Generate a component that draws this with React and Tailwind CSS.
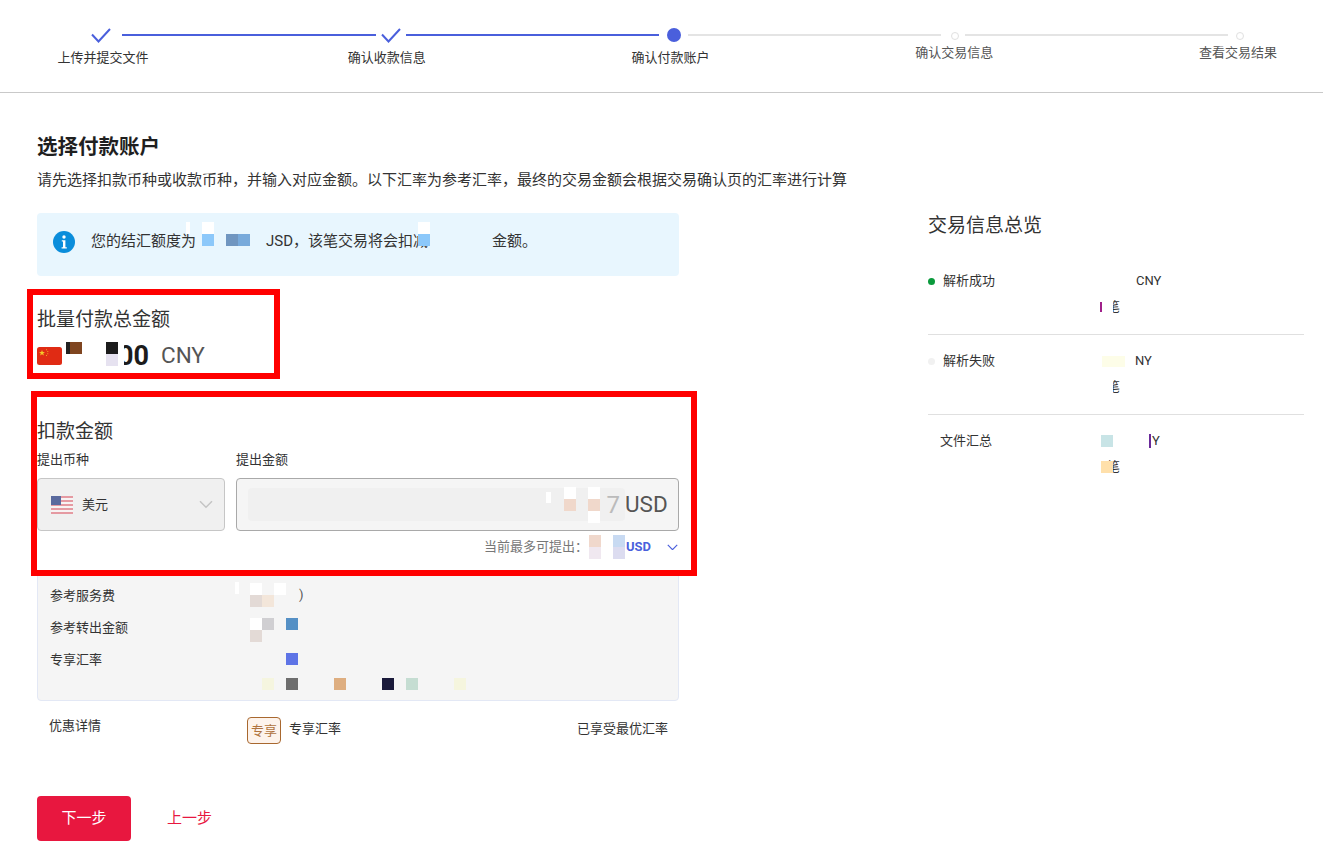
import React from "react";

const Check = () => (
  <svg width="20" height="15" viewBox="0 0 20 15" fill="none" className="shrink-0">
    <polyline points="1,6.5 7.5,13.5 19,1" stroke="#4a5fdc" strokeWidth="2" />
  </svg>
);

const Chevron = ({ color, size = 14, stroke = 1.5 }) => (
  <svg width={size} height={size * 0.6} viewBox="0 0 14 8" fill="none" className="shrink-0">
    <polyline points="1,1 7,7 13,1" stroke={color} strokeWidth={stroke} />
  </svg>
);

const FlagCN = () => (
  <svg width="25" height="18" viewBox="0 0 25 18" className="shrink-0">
    <rect width="25" height="18" rx="2.5" fill="#e02b14" />
    <polygon points="5,3 5.8,5 8,5 6.2,6.3 6.9,8.4 5,7.2 3.1,8.4 3.8,6.3 2,5 4.2,5" fill="#f4c92a" />
    <circle cx="9.5" cy="2.8" r="0.5" fill="#f4c92a" />
    <circle cx="10.8" cy="4.6" r="0.5" fill="#f4c92a" />
    <circle cx="10.8" cy="6.8" r="0.5" fill="#f4c92a" />
    <circle cx="9.5" cy="8.6" r="0.5" fill="#f4c92a" />
  </svg>
);

const FlagUS = () => (
  <svg width="22" height="18" viewBox="0 0 22 18" className="shrink-0">
    <rect width="22" height="18" rx="2" fill="#f7f3f3" />
    <rect y="0" width="22" height="2" fill="#e59aa2" />
    <rect y="4" width="22" height="2" fill="#e59aa2" />
    <rect y="8" width="22" height="2" fill="#e59aa2" />
    <rect y="12" width="22" height="2" fill="#e59aa2" />
    <rect y="16" width="22" height="2" fill="#e59aa2" />
    <rect width="10" height="9" fill="#5a6a9e" />
  </svg>
);

const InfoIcon = () => (
  <svg width="22" height="22" viewBox="0 0 22 22" className="shrink-0">
    <circle cx="11" cy="11" r="11" fill="#0a8ddb" />
    <circle cx="11" cy="6" r="1.7" fill="#fff" />
    <path d="M8.8 9.2h3.6v7h1.4v1.4H8.6v-1.4h1.4v-5.6H8.8z" fill="#fff" />
  </svg>
);

// pixelated redaction squares, 12px grid, "" leaves a cell empty
const Mosaic = ({ rows, className = "" }) => (
  <div className={"flex flex-col shrink-0 " + className}>
    {rows.map((row, i) => (
      <div key={i} className="flex">
        {row.map((cell, j) => (
          <span key={j} className={"block w-[12px] h-[12px] " + cell} />
        ))}
      </div>
    ))}
  </div>
);

const Blot = ({ className }) => <span className={"absolute block " + className} />;

const Label = ({ children, className = "" }) => (
  <div className={"w-[100px] text-center text-[13px] leading-[18px] " + className}>{children}</div>
);

const Stepper = () => (
  <div className="h-[93px] border-b border-[#c9c9c9]">
    <div className="flex items-center pl-[91px] pt-[27px] h-[43px]">
      <Check />
      <div className="ml-[11px] w-[254px] h-[2px] bg-[#4a5fdc]" />
      <div className="ml-[5px]"><Check /></div>
      <div className="ml-[5px] w-[253px] h-[2px] bg-[#4a5fdc]" />
      <div className="ml-[8px] w-[14px] h-[14px] rounded-full bg-[#4a5fdc]" />
      <div className="ml-[7px] w-[253px] h-[2px] bg-[#e4e4e4]" />
      <div className="ml-[10px] mt-[2px] w-[8px] h-[8px] rounded-full border border-[#e0e0e0]" />
      <div className="ml-[6px] w-[263px] h-[2px] bg-[#e4e4e4]" />
      <div className="ml-[8px] mt-[2px] w-[8px] h-[8px] rounded-full border border-[#e0e0e0]" />
    </div>
    <div className="flex justify-between pl-[53px] pr-[35px] text-[#333]">
      <Label className="mt-[6px]">上传并提交文件</Label>
      <Label className="mt-[6px]">确认收款信息</Label>
      <Label className="mt-[6px]">确认付款账户</Label>
      <Label className="mt-px text-[#555]">确认交易信息</Label>
      <Label className="mt-px text-[#555]">查看交易结果</Label>
    </div>
  </div>
);

const InfoBox = () => (
  <div className="relative flex items-center h-[63px] pl-[16px] pb-[6px] rounded bg-[#e8f6fe] text-[15px] text-[#333]">
    <InfoIcon />
    <span className="ml-[16px]">您的结汇额度为</span>
    <Mosaic
      className="ml-[6px] self-start mt-[9px]"
      rows={[
        ["bg-white"],
        ["bg-[#8cc8fa]", "", "bg-[#7096c0]", "bg-[#78aadb]"],
      ]}
    />
    <span className="ml-[16px]">JSD，该笔交易将会扣减</span>
    <Mosaic
      className="ml-[-10px] self-start mt-[9px]"
      rows={[["bg-white"], ["bg-[#8cc8fa]"]]}
    />
    <span className="ml-[62px]">金额。</span>
    <Blot className="left-[149px] top-[9px] w-[4px] h-[12px] bg-white" />
  </div>
);

const TotalAmount = () => (
  <div className="relative mt-[29px]">
    <div className="pt-[2px] text-[19px] leading-[26px] text-[#333]">批量付款总金额</div>
    <div className="relative flex items-center h-[34px] mt-[6px]">
      <FlagCN />
      <span className="ml-[4px] self-start mt-[3px] w-[4px] h-[12px] bg-[#222]" />
      <Mosaic
        className="self-start mt-[3px]"
        rows={[
          ["bg-[#7f4520]", "", "", "bg-[#1c1c1c]"],
          ["", "", "", "bg-[#e6e2f0]"],
        ]}
      />
      <span className="text-[27px] font-bold text-[#1c1c1c]">00</span>
      <span className="ml-[12px] text-[22.5px] text-[#555]">CNY</span>
      <Blot className="left-[81px] top-[3px] w-[6px] h-[24px] bg-white" />
    </div>
    <div className="absolute left-[-10px] top-[-16px] z-10 w-[253px] h-[90px] border-[6px] border-[#ff0000]" />
  </div>
);

const Deduction = () => (
  <div className="relative mt-[44px]">
    <div className="pt-[2px] text-[19px] leading-[26px] text-[#333]">扣款金额</div>
    <div className="flex mt-[6px] text-[13px] leading-[18px] text-[#333]">
      <span className="w-[199px]">提出币种</span>
      <span>提出金额</span>
    </div>
    <div className="flex gap-[11px] mt-[9px]">
      <div className="flex items-center w-[188px] h-[53px] pl-[13px] pr-[11px] rounded border border-[#c6c6c6] bg-[#f0f0f0]">
        <FlagUS />
        <span className="ml-[9px] text-[13px] text-[#333]">美元</span>
        <span className="ml-auto"><Chevron color="#c4c4c4" /></span>
      </div>
      <div className="flex items-center flex-1 h-[53px] pl-[11px] rounded border border-[#a9a9a9] bg-[#f5f5f5]">
        <div className="flex items-center justify-end w-[377px] h-[33px] pr-[5px] rounded bg-[#f0f0f0] text-[24px] text-[#bbbbbb]">
          <span className="w-[5px] h-[11px] mr-[13px] mb-[14px] bg-white" />
          <Mosaic
            rows={[
              ["bg-white", "", "bg-white"],
              ["bg-[#f0d8cb]", "", "bg-[#f0d8cb]"],
              ["", "", "bg-white"],
            ]}
          />
          <span className="ml-[7px]">7</span>
        </div>
        <span className="text-[22.5px] text-[#555]">USD</span>
      </div>
    </div>
    <div className="flex items-center justify-end h-[18px] mt-[7px] pr-px">
      <span className="text-[13px] text-[#777]">当前最多可提出：</span>
      <Mosaic
        className="ml-px"
        rows={[
          ["bg-[#f0d8cc]", "", "bg-[#c8daf2]"],
          ["bg-[#f0e8f0]", "", "bg-[#dcdcf0]"],
        ]}
      />
      <span className="ml-px text-[13px] font-bold text-[#4a5fdc]">USD</span>
      <span className="ml-[16px]"><Chevron color="#4a5fdc" size={11} /></span>
    </div>
    <div className="absolute left-[-6px] top-[-26px] z-10 w-[666px] h-[185px] border-[6px] border-[#ff0000]" />
  </div>
);

const FeeRow = ({ label, children }) => (
  <div className="flex items-center h-[32px] text-[13px] text-[#333]">
    <span className="w-[200px] mt-[2px]">{label}</span>
    {children}
  </div>
);

const FeePanel = () => (
  <div className="relative mt-[16px] h-[129px] pt-[6px] px-[12px] rounded-b border border-[#e3e8f5] bg-[#f5f5f5]">
    <FeeRow label="参考服务费">
      <Mosaic
        rows={[
          ["bg-white", "", "bg-white"],
          ["bg-[#e3dad6]", "bg-[#f3e6da]"],
        ]}
      />
      <span className="ml-[13px] text-[#555]">)</span>
    </FeeRow>
    <FeeRow label="参考转出金额">
      <Mosaic
        className="mt-[6px]"
        rows={[
          ["bg-white", "bg-[#d0cfd2]", "", "bg-[#5590c5]"],
          ["bg-[#e3dad6]"],
        ]}
      />
    </FeeRow>
    <FeeRow label="专享汇率">
      <Mosaic rows={[["", "", "", "bg-[#5e74e6]"]]} />
    </FeeRow>
    <div className="flex pl-[200px] pt-[3px]">
      <Mosaic
        rows={[[
          "", "bg-[#f5f5df]", "", "bg-[#6e6e6e]", "", "", "", "bg-[#deae80]", "", "", "",
          "bg-[#1a1a3a]", "", "bg-[#c5ddd2]", "", "", "", "bg-[#f5f5de]",
        ]]}
      />
    </div>
    <Blot className="left-[197px] top-[9px] w-[4px] h-[12px] bg-white" />
  </div>
);

const Discount = () => (
  <div className="flex items-start h-[27px] mt-[16px] pl-[12px] pr-[11px] text-[13px] text-[#333]">
    <span className="w-[198px] leading-[18px]">优惠详情</span>
    <span className="flex items-center justify-center w-[34px] h-[27px] rounded border border-[#a8682f] bg-[#fdf3ec] text-[#b0733f]">专享</span>
    <span className="ml-[8px] mt-[2px]">专享汇率</span>
    <span className="ml-auto mt-[2px]">已享受最优汇率</span>
  </div>
);

const SummaryRow = ({ label, dot, indent, first, second, last }) => (
  <div className={"flex items-start pt-[16px] text-[13px] leading-[20px] text-[#333] " + (last ? "" : "h-[80px] border-b border-[#e0e0e0]")}>
    <div className="flex items-center w-[170px]">
      <span className={"w-[7px] h-[7px] rounded-full " + dot} />
      <span className={indent}>{label}</span>
    </div>
    <div>
      <div className="flex items-center h-[20px]">{first}</div>
      <div className="flex items-center h-[20px] mt-[6px]">{second}</div>
    </div>
  </div>
);

const Summary = () => (
  <div className="w-[376px] ml-[249px] shrink-0">
    <div className="text-[19px] leading-[26px] text-[#333]">交易信息总览</div>
    <div className="mt-[16px]">
      <SummaryRow
        label="解析成功"
        dot="bg-[#0a9a3c]"
        indent="ml-[8px]"
        first={<span className="ml-[38px]">CNY</span>}
        second={
          <>
            <span className="ml-[2px] w-[2px] h-[10px] bg-[#a0208a]" />
            <span className="ml-[5px]">笔</span>
            <span className="ml-[-13px] w-[6px] h-[20px] bg-white" />
          </>
        }
      />
      <SummaryRow
        label="解析失败"
        dot="bg-[#f1f1f1]"
        indent="ml-[8px]"
        first={
          <>
            <span className="ml-[4px] w-[23px] h-[11px] bg-[#fdfde8]" />
            <span className="ml-[10px]">NY</span>
          </>
        }
        second={
          <>
            <span className="ml-[9px]">笔</span>
            <span className="ml-[-13px] w-[6px] h-[20px] bg-white" />
          </>
        }
      />
      <SummaryRow
        label="文件汇总"
        dot="bg-transparent"
        indent="ml-[5px]"
        last
        first={
          <>
            <span className="ml-[3px] w-[12px] h-[12px] bg-[#c8e4e6]" />
            <span className="ml-[36px] w-[2px] h-[14px] bg-[#6a2a9a]" />
            <span className="ml-px">Y</span>
          </>
        }
        second={
          <>
            <span className="ml-[9px]">笔</span>
            <span className="ml-[-19px] w-[12px] h-[12px] bg-[#ffe0ab]" />
          </>
        }
      />
    </div>
  </div>
);

export default function App() {
  return (
    <div className="h-[860px] overflow-hidden bg-white font-['Roboto','Noto_Sans_CJK_SC',sans-serif]">
      <Stepper />
      <div className="pl-[37px]">
        <h1 className="mt-[39px] text-[20.5px] leading-[30px] font-bold text-[#1f1f1f]">选择付款账户</h1>
        <p className="mt-[8px] text-[15px] leading-[20px] text-[#333]">
          请先选择扣款币种或收款币种，并输入对应金额。以下汇率为参考汇率，最终的交易金额会根据交易确认页的汇率进行计算
        </p>
        <div className="flex mt-[23px]">
          <div className="w-[642px] shrink-0">
            <InfoBox />
            <TotalAmount />
            <Deduction />
            <FeePanel />
            <Discount />
            <div className="flex items-center mt-[52px] text-[15px]">
              <button className="w-[94px] h-[45px] rounded bg-[#e8173f] text-white">下一步</button>
              <button className="ml-[36px] mt-[-1px] text-[#e8173f]">上一步</button>
            </div>
          </div>
          <Summary />
        </div>
      </div>
    </div>
  );
}
